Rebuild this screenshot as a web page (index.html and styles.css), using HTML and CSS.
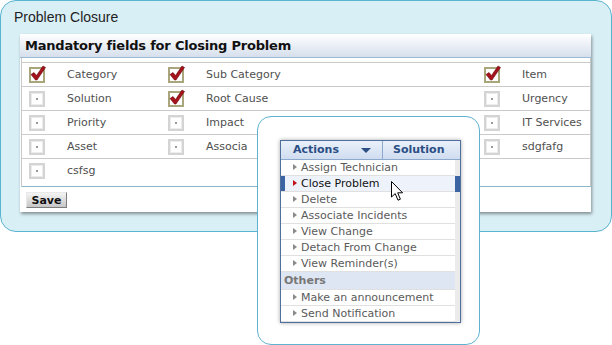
FILE: index.html
```html
<!DOCTYPE html>
<html lang="en">
<head>
  <meta charset="UTF-8">
  <title>Problem Closure</title>
  <link rel="stylesheet" href="styles.css">
</head>
<body>
  <div class="panel">
    <div class="panel-title">Problem Closure</div>
    <div class="card">
      <div class="card-head">Mandatory fields for Closing Problem</div>
      <div class="fields">
        <div class="row">
          <div class="field"><span class="cb checked"></span>Category</div>
          <div class="field"><span class="cb checked"></span>Sub Category</div>
          <div class="field"><span class="cb checked"></span>Item</div>
        </div>
        <div class="row">
          <div class="field"><span class="cb"></span>Solution</div>
          <div class="field"><span class="cb checked"></span>Root Cause</div>
          <div class="field"><span class="cb"></span>Urgency</div>
        </div>
        <div class="row">
          <div class="field"><span class="cb"></span>Priority</div>
          <div class="field"><span class="cb"></span>Impact</div>
          <div class="field"><span class="cb"></span>IT Services</div>
        </div>
        <div class="row">
          <div class="field"><span class="cb"></span>Asset</div>
          <div class="field"><span class="cb"></span>Associa</div>
          <div class="field"><span class="cb"></span>sdgfafg</div>
        </div>
        <div class="row last">
          <div class="field"><span class="cb"></span>csfsg</div>
        </div>
      </div>
      <div class="card-foot">
        <button class="btn">Save</button>
      </div>
    </div>
  </div>

  <div class="popup">
    <div class="menu">
      <div class="menu-head">
        <div class="tab tab-actions">Actions <span class="caret"></span></div>
        <div class="tab">Solution</div>
      </div>
      <ul class="menu-list">
        <li>Assign Technician</li>
        <li class="selected">Close Problem</li>
        <li>Delete</li>
        <li>Associate Incidents</li>
        <li>View Change</li>
        <li>Detach From Change</li>
        <li>View Reminder(s)</li>
        <li class="group">Others</li>
        <li>Make an announcement</li>
        <li>Send Notification</li>
      </ul>
    </div>
  </div>

  <svg class="pointer" width="14" height="22" viewBox="0 0 14 22">
    <path d="M1.5 1.5 L1.5 17 L5.2 13.6 L8 20.2 L10.4 19.2 L7.7 12.8 L12.6 12.8 Z" fill="#fff" stroke="#000" stroke-width="1"/>
  </svg>
</body>
</html>
```

FILE: styles.css
```css
* {
  margin: 0;
  padding: 0;
  box-sizing: border-box;
}

body {
  font-family: 'DejaVu Sans', Verdana, sans-serif;
  background: #fff;
  color: #333;
  position: relative;
  width: 612px;
  height: 345px;
  overflow: hidden;
}

.panel {
  width: 612px;
  height: 232px;
  background: #d9eff6;
  border: 1px solid #5ab4d0;
  border-radius: 16px;
}

.panel-title {
  font-family: 'Liberation Sans', Arial, sans-serif;
  font-size: 14px;
  color: #222;
  line-height: 18px;
  padding: 7px 0 0 13px;
}

.card {
  margin: 8px 0 0 19px;
  width: 571px;
  background: #fff;
  box-shadow: 1px 2px 3px rgba(0, 0, 0, 0.4);
}

.card-head {
  height: 24px;
  line-height: 23px;
  padding-left: 5px;
  font-weight: bold;
  font-size: 13px;
  letter-spacing: -0.2px;
  color: #111;
  background: linear-gradient(#ffffff, #d5dfec);
  border-bottom: 1px solid #9cbad6;
}

.fields {
  margin-left: 1px;
  padding-top: 4px;
  border-left: 1px solid #c8c8c8;
  border-right: 1px solid #c8c8c8;
  border-bottom: 1px solid #8ab6ca;
}

.row {
  display: grid;
  grid-template-columns: 139px 316px 1fr;
  align-items: center;
  height: 24px;
  padding-left: 7px;
  border-top: 1px solid #cacaca;
  font-size: 11px;
  color: #505050;
}

.row.last {
  height: 28px;
  padding-bottom: 4px;
}

.field {
  display: flex;
  align-items: center;
  white-space: nowrap;
}

.cb {
  position: relative;
  width: 16px;
  height: 16px;
  margin-right: 22px;
  border: 2px solid #d4d4d4;
  background: #fff;
  box-shadow: inset 0 0 0 1px #ececec;
}

.cb::after {
  content: '';
  position: absolute;
  left: 5px;
  top: 5px;
  width: 2px;
  height: 2px;
  background: #9a9a9a;
}

.cb.checked {
  border-color: #aaa67c;
  box-shadow: none;
}

.cb.checked::after {
  left: -1px;
  top: -4px;
  width: 16px;
  height: 16px;
  background: url("data:image/svg+xml,%3Csvg xmlns='http://www.w3.org/2000/svg' viewBox='0 0 16 16'%3E%3Cpath d='M1 9.5 L4 7.5 L6.5 10.5 L13 1 L15.5 2.5 L7 15 L5.5 15 Z' fill='%23a5121b' stroke='%236a0a0f' stroke-width='0.6'/%3E%3C/svg%3E") no-repeat;
}

.card-foot {
  padding: 5px 0 4px 6px;
}

.btn {
  display: block;
  width: 41px;
  height: 16px;
  font-family: 'DejaVu Sans', Verdana, sans-serif;
  font-weight: bold;
  font-size: 11px;
  line-height: 13px;
  color: #111;
  background: linear-gradient(#f4f4f4, #c6c6c6);
  border: 1px solid #e8e8e8;
  border-right-color: #7d7d7d;
  border-bottom-color: #7d7d7d;
}

.popup {
  position: absolute;
  left: 257px;
  top: 116px;
  width: 223px;
  height: 229px;
  background: #fff;
  border: 1px solid #5fb2cf;
  border-radius: 14px;
  padding: 23px 0 0 22px;
}

.menu {
  width: 181px;
  border: 1px solid #4f6f9c;
  box-shadow: 0 0 4px rgba(0, 0, 0, 0.35);
  background: #fff;
}

.menu-head {
  display: flex;
  height: 19px;
  background: linear-gradient(#e9f0fa, #d0ddf0);
  border-bottom: 1px solid #8ca8cc;
  font-size: 11px;
  font-weight: bold;
  color: #2b4e84;
  line-height: 18px;
}

.tab {
  padding-left: 10px;
  flex: 1;
}

.tab-actions {
  flex: 0 0 102px;
  padding-left: 12px;
  border-right: 1px solid #8ca8cc;
  position: relative;
}

.caret {
  position: absolute;
  left: 80px;
  top: 7px;
  border-left: 5px solid transparent;
  border-right: 5px solid transparent;
  border-top: 5px solid #2b4e84;
}

.menu-list {
  list-style: none;
  font-size: 11px;
  color: #5a5a5a;
  border-right: 5px solid #ebebeb;
}

.menu-list li {
  position: relative;
  height: 16px;
  line-height: 15px;
  padding-left: 20px;
  border-bottom: 1px solid #e0e0e0;
  white-space: nowrap;
}

.menu-list li::before {
  content: '';
  position: absolute;
  left: 12px;
  top: 4px;
  border-top: 3.5px solid transparent;
  border-bottom: 3.5px solid transparent;
  border-left: 4px solid #8a8a8a;
}

.menu-list li.selected {
  color: #111;
  background: #eef3fb;
  box-shadow: inset 4px 0 0 #3d64a2, 5px 0 0 #3d64a2;
}

.menu-list li.selected::before {
  border-left-color: #c0121a;
}

.menu-list li.group {
  height: 18px;
  line-height: 17px;
  padding-left: 3px;
  font-weight: bold;
  color: #777;
  background: #dfe6f3;
}

.menu-list li.group::before {
  display: none;
}

.pointer {
  position: absolute;
  left: 390px;
  top: 180px;
}
```
